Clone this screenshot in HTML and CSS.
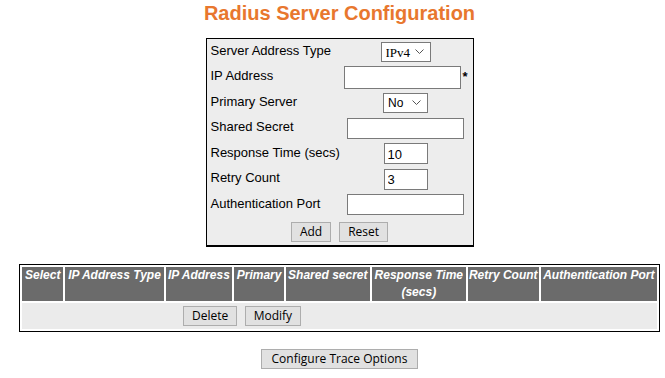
FILE: index.html
```html
<!DOCTYPE html>
<html lang="en">
<head>
    <meta charset="UTF-8">
    <title>Radius Server Configuration</title>
    <link rel="stylesheet" href="styles.css">
</head>
<body>
    <div class="page">
        <h1 class="page-title">Radius Server Configuration</h1>

        <form class="radius-form" onsubmit="return false;">
            <div class="form-row">
                <label for="addrType">Server Address Type</label>
                <div class="field">
                    <select id="addrType" class="sel sel-type">
                        <option>IPv4</option>
                        <option>IPv6</option>
                    </select>
                </div>
            </div>
            <div class="form-row">
                <label for="ipAddr">IP Address</label>
                <div class="field">
                    <input type="text" id="ipAddr" class="txt txt-ip"><span class="req">*</span>
                </div>
            </div>
            <div class="form-row">
                <label for="primary">Primary Server</label>
                <div class="field">
                    <select id="primary" class="sel sel-yn">
                        <option>No</option>
                        <option>Yes</option>
                    </select>
                </div>
            </div>
            <div class="form-row">
                <label for="secret">Shared Secret</label>
                <div class="field">
                    <input type="password" id="secret" class="txt txt-wide">
                </div>
            </div>
            <div class="form-row">
                <label for="respTime">Response Time (secs)</label>
                <div class="field">
                    <input type="text" id="respTime" class="txt txt-small" value="10">
                </div>
            </div>
            <div class="form-row">
                <label for="retry">Retry Count</label>
                <div class="field">
                    <input type="text" id="retry" class="txt txt-small" value="3">
                </div>
            </div>
            <div class="form-row">
                <label for="authPort">Authentication Port</label>
                <div class="field">
                    <input type="text" id="authPort" class="txt txt-wide">
                </div>
            </div>
            <div class="form-actions">
                <button type="button" class="btn">Add</button>
                <button type="reset" class="btn">Reset</button>
            </div>
        </form>

        <table class="server-table">
            <colgroup>
                <col class="c-select">
                <col class="c-type">
                <col class="c-ip">
                <col class="c-primary">
                <col class="c-secret">
                <col class="c-resp">
                <col class="c-retry">
                <col class="c-port">
            </colgroup>
            <thead>
                <tr>
                    <th>Select</th>
                    <th>IP Address Type</th>
                    <th>IP Address</th>
                    <th>Primary</th>
                    <th>Shared secret</th>
                    <th>Response Time (secs)</th>
                    <th>Retry Count</th>
                    <th>Authentication Port</th>
                </tr>
            </thead>
            <tbody>
                <tr>
                    <td colspan="8" class="table-actions">
                        <button type="button" class="btn">Delete</button>
                        <button type="button" class="btn">Modify</button>
                    </td>
                </tr>
            </tbody>
        </table>

        <div class="trace-bar">
            <button type="button" class="btn btn-trace">Configure Trace Options</button>
        </div>
    </div>
</body>
</html>
```

FILE: styles.css
```css
html, body {
    margin: 0;
    padding: 0;
    overflow: hidden;
}

body {
    font-family: "Liberation Sans", Arial, sans-serif;
    background: #fff;
    color: #000;
}

.page {
    padding-left: 14px;
    text-align: center;
}

.page-title {
    font-size: 20px;
    font-weight: bold;
    line-height: 23px;
    color: #e8772e;
    margin: 2px 0 13px;
}

/* form box */
.radius-form {
    width: 266px;
    margin: 0 auto;
    background: #ededed;
    border: 1px solid #000;
    border-bottom-width: 2px;
    padding: 0 0 3px;
    text-align: left;
}

.form-row {
    display: grid;
    grid-template-columns: 133px 124px;
    align-items: center;
    height: 25.5px;
    padding-left: 4px;
}

.form-row label {
    font-size: 13px;
    margin-top: -3px;
}

.field {
    display: flex;
    justify-content: center;
    align-items: center;
}

.txt {
    font-family: "Liberation Sans", Arial, sans-serif;
    font-size: 13px;
    height: 21px;
    box-sizing: border-box;
    border: 1px solid #7a7a7a;
    background: #fff;
    padding: 1px 3px 0;
    margin: 0;
}

.txt-ip {
    width: 117px;
    height: 23px;
    margin-left: 1px;
}

.txt-wide {
    width: 117px;
}

.txt-small {
    width: 44px;
}

.req {
    font-size: 13px;
    font-weight: bold;
    align-self: flex-start;
    margin: 3px 0 0 1px;
    width: 6px;
}

.sel {
    -webkit-appearance: none;
    appearance: none;
    font-family: "Liberation Sans", Arial, sans-serif;
    font-size: 12px;
    height: 20px;
    box-sizing: border-box;
    border: 1px solid #7a7a7a;
    border-radius: 0;
    margin: 0;
    padding: 1px 0 0 4px;
    background: #fff url("data:image/svg+xml;utf8,<svg xmlns='http://www.w3.org/2000/svg' width='9' height='5' viewBox='0 0 9 5'><path d='M0.5 0.5 L4.5 4.5 L8.5 0.5' fill='none' stroke='%23555' stroke-width='1'/></svg>") no-repeat right 6px center;
}

.sel-type {
    width: 50px;
    font-family: "Liberation Serif", "Times New Roman", serif;
    font-size: 13px;
}

.sel-yn {
    width: 45px;
}

.form-actions {
    display: flex;
    justify-content: center;
    gap: 8px;
    padding: 4px 0 0 0;
}

.btn {
    font-family: "Open Sans", "Segoe UI", sans-serif;
    font-size: 12px;
    line-height: 16px;
    height: 20px;
    background: #e1e1e1;
    border: 1px solid #adadad;
    border-radius: 0;
    padding: 0 8px;
    margin: 0;
    color: #000;
}

/* server list */
.server-table {
    width: 641px;
    margin: 17px auto 0;
    border: 1px solid #000;
    border-spacing: 2px;
    table-layout: fixed;
}

.c-select { width: 41px; }
.c-type { width: 97px; }
.c-ip { width: 66px; }
.c-primary { width: 49px; }
.c-secret { width: 83px; }
.c-resp { width: 93px; }
.c-retry { width: 70px; }
.c-port { width: 115px; }

.server-table th {
    background: #6b6b6b;
    color: #fff;
    font-size: 12px;
    font-weight: bold;
    font-style: italic;
    line-height: 17px;
    vertical-align: top;
    padding: 0 1px 0;
    height: 34px;
    box-sizing: border-box;
    white-space: normal;
}

.table-actions {
    background: #ebebeb;
    height: 26px;
    padding: 0 0 0 161px;
    text-align: left;
}

.table-actions .btn {
    margin-right: 3px;
}

.trace-bar {
    margin-top: 17px;
}

.btn-trace {
    padding: 0 10px;
}
```
